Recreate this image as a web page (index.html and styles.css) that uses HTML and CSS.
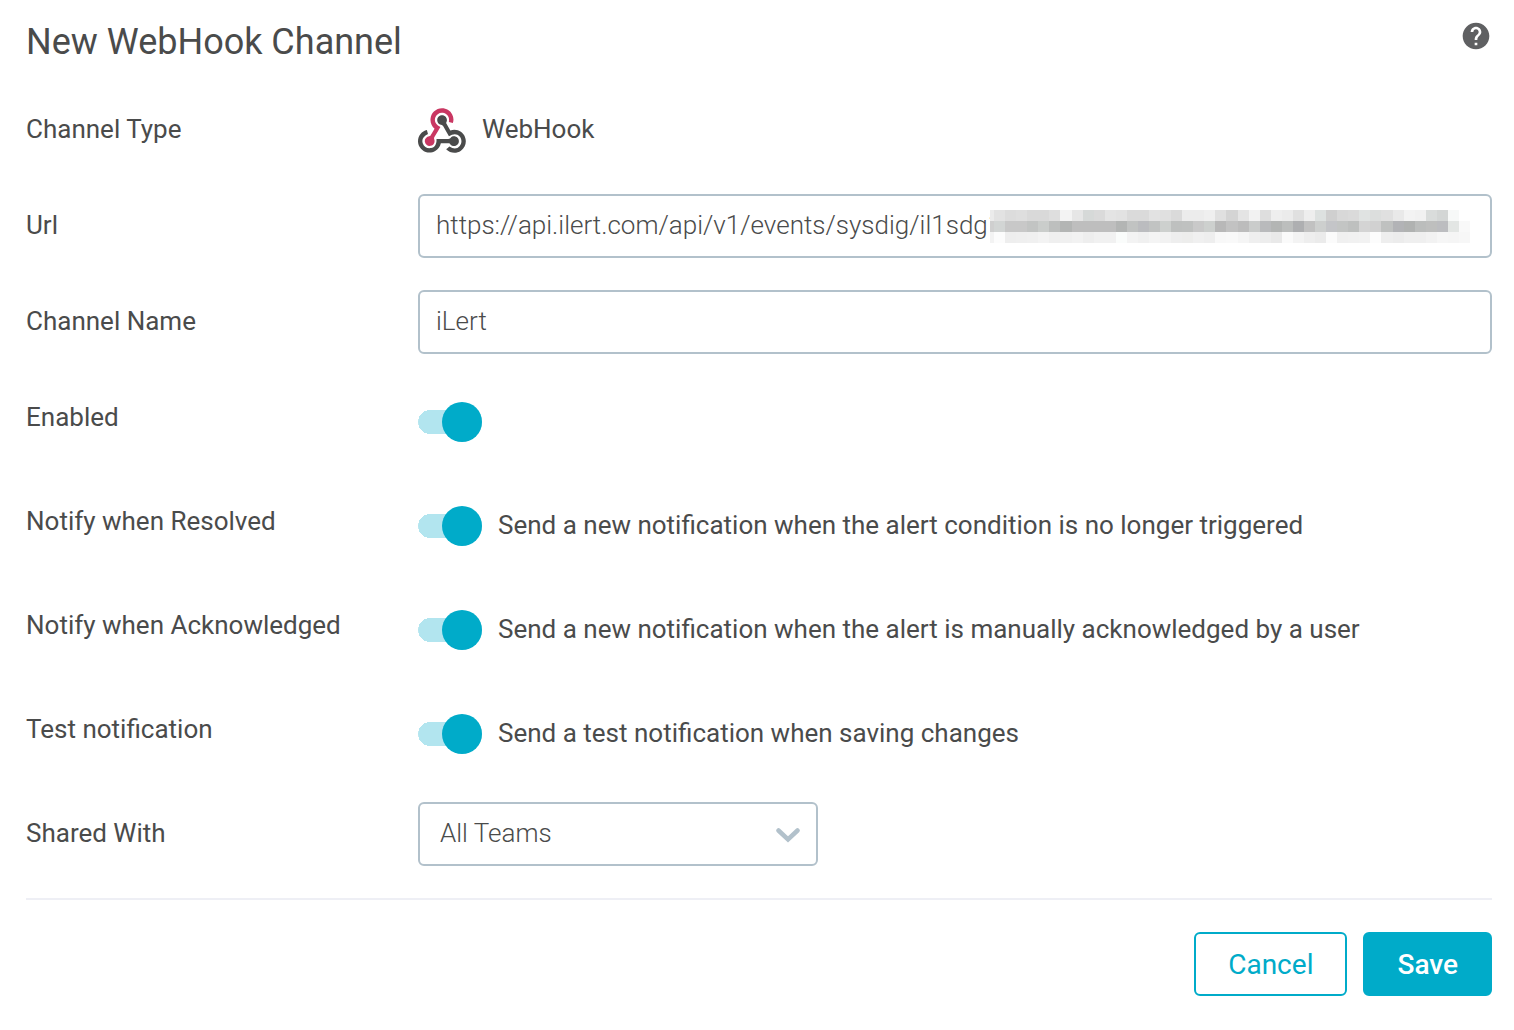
FILE: index.html
```html
<!DOCTYPE html>
<html lang="en">
<head>
<meta charset="utf-8">
<meta name="viewport" content="width=device-width, initial-scale=1">
<title>New WebHook Channel</title>
<link rel="stylesheet" href="styles.css">
</head>
<body>
<form class="channel">
  <header class="channel-header">
    <h1 class="title">New WebHook Channel</h1>
    <button class="help" type="button" aria-label="Help">
      <svg viewBox="0 0 24 24" width="32" height="32" aria-hidden="true"><path fill="#5f6062" d="M12 2C6.480 2 2 6.480 2 12s4.480 10 10 10 10-4.480 10-10S17.520 2 12 2zm1 17h-2v-2h2v2zm2.070-7.750l-.9.920C13.450 12.900 13 13.500 13 15h-2v-.5c0-1.100.450-2.100 1.170-2.830l1.240-1.260c.370-.360.590-.860.590-1.410 0-1.100-.9-2-2-2s-2 .9-2 2H8c0-2.210 1.790-4 4-4s4 1.790 4 4c0 .880-.360 1.680-.930 2.250z"/></svg>
    </button>
  </header>

  <div class="fields">
    <div class="row">
      <span class="label">Channel Type</span>
      <div class="control type">
        <svg viewBox="0 0 256 239" width="48" height="45" aria-hidden="true">
          <path fill="#c93762" d="M119.540 100.503C108.930 118.339 98.765 135.611 88.388 152.754C85.723 157.154 84.404 160.739 86.533 166.333C92.411 181.787 84.119 196.826 68.535 200.908C53.838 204.759 39.519 195.100 36.603 179.365C34.019 165.438 44.827 151.785 60.182 149.608C61.469 149.424 62.782 149.403 64.945 149.241C72.469 136.624 80.177 123.700 88.303 110.073C73.612 95.465 64.868 78.389 66.803 57.229C68.171 42.272 74.053 29.346 84.803 18.752C105.393 -1.536 136.805 -4.821 161.049 10.751C184.333 25.709 194.997 54.845 185.907 79.782C179.053 77.924 172.151 76.050 164.564 73.992C167.418 60.127 165.307 47.677 155.956 37.011C149.778 29.969 141.850 26.278 132.835 24.918C114.764 22.188 97.021 33.798 91.756 51.536C85.780 71.667 94.825 88.111 119.540 100.503Z"/>
          <path fill="#4a4b4b" d="M149.841 79.411C157.316 92.597 164.906 105.983 172.428 119.246C210.449 107.483 239.114 128.530 249.399 151.063C261.820 178.282 253.329 210.520 228.933 227.312C203.893 244.551 172.226 241.606 150.041 219.462C155.695 214.729 161.377 209.975 167.448 204.896C189.360 219.088 208.525 218.420 222.753 201.614C234.886 187.277 234.623 165.900 222.138 151.864C207.730 135.667 188.431 135.173 165.103 150.721C155.426 133.553 145.581 116.522 136.210 99.230C133.051 93.402 129.562 90.021 122.441 88.787C110.547 86.725 102.869 76.512 102.408 65.070C101.955 53.754 108.622 43.525 119.042 39.539C129.364 35.591 141.477 38.778 148.420 47.554C154.094 54.724 155.897 62.794 152.911 71.637C152.081 74.103 151.006 76.489 149.841 79.411Z"/>
          <path fill="#4a4b4b" d="M167.707 187.210L121.936 187.210C117.550 205.254 108.074 219.822 91.746 229.086C79.054 236.286 65.374 238.727 50.814 236.377C24.006 232.053 2.086 207.920 .156 180.745C-2.028 149.962 19.131 122.599 47.334 116.453C49.281 123.524 51.249 130.663 53.196 137.717C27.320 150.919 18.364 167.553 25.605 188.353C31.981 206.657 50.090 216.690 69.753 212.810C89.833 208.848 99.957 192.160 98.721 165.378C117.757 165.378 136.809 165.181 155.847 165.475C163.281 165.592 169.020 164.821 174.620 158.267C183.841 147.483 200.811 148.456 210.741 158.641C220.889 169.050 220.403 185.798 209.664 195.768C199.303 205.388 182.933 204.874 173.240 194.509C171.248 192.372 169.678 189.835 167.707 187.210Z"/>
        </svg>
        <span class="type-name">WebHook</span>
      </div>
    </div>

    <div class="row">
      <label class="label" for="url">Url</label>
      <div class="control url">
        <input class="input" id="url" type="text" value="https://api.ilert.com/api/v1/events/sysdig/il1sdg1">
        <svg class="mask" id="mask" viewBox="0 0 477 33" width="480" height="33" preserveAspectRatio="none" shape-rendering="crispEdges" aria-hidden="true"></svg>
      </div>
    </div>

    <div class="row">
      <label class="label" for="name">Channel Name</label>
      <div class="control"><input class="input" id="name" type="text" value="iLert"></div>
    </div>

    <div class="row row-toggle">
      <label class="label" for="enabled">Enabled</label>
      <div class="control toggle"><input class="switch" id="enabled" type="checkbox" checked></div>
    </div>

    <div class="row row-toggle">
      <label class="label" for="resolved">Notify when Resolved</label>
      <div class="control toggle">
        <input class="switch" id="resolved" type="checkbox" checked>
        <label class="hint" for="resolved">Send a new notification when the alert condition is no longer triggered</label>
      </div>
    </div>

    <div class="row row-toggle">
      <label class="label" for="acknowledged">Notify when Acknowledged</label>
      <div class="control toggle">
        <input class="switch" id="acknowledged" type="checkbox" checked>
        <label class="hint" for="acknowledged">Send a new notification when the alert is manually acknowledged by a user</label>
      </div>
    </div>

    <div class="row row-toggle">
      <label class="label" for="test">Test notification</label>
      <div class="control toggle">
        <input class="switch" id="test" type="checkbox" checked>
        <label class="hint" for="test">Send a test notification when saving changes</label>
      </div>
    </div>

    <div class="row">
      <label class="label" for="shared">Shared With</label>
      <div class="control shared">
        <select class="input select" id="shared"><option>All Teams</option></select>
        <svg class="chevron" viewBox="0 0 24 16" width="24" height="16" aria-hidden="true"><path d="M2.500 3.500L12 12.500L21.500 3.500" fill="none" stroke="#b2c1cb" stroke-width="4.500" stroke-linecap="round"/></svg>
      </div>
    </div>
  </div>

  <footer class="actions">
    <button class="button" type="button">Cancel</button>
    <button class="button primary" type="submit">Save</button>
  </footer>
</form>
<script src="mask.js"></script>
</body>
</html>
```
FILE: styles.css
```css
* {
  box-sizing: border-box;
}

body {
  margin: 0;
  background: #fff;
  color: #4a4b4b;
  font-family: Roboto, "Liberation Sans", sans-serif;
  font-size: 26px;
  line-height: 32px;
}

.channel {
  padding: 18px 22px 34px 26px;
}

.channel-header {
  display: flex;
  justify-content: space-between;
  align-items: flex-start;
  margin-bottom: 32px;
}

.title {
  margin: 0;
  font-size: 36px;
  font-weight: 400;
  line-height: 48px;
}

.help {
  display: flex;
  margin: 0;
  padding: 2px 0;
  border: 0;
  background: none;
}

.fields {
  display: flex;
  flex-direction: column;
  gap: 32px;
  padding-bottom: 32px;
  border-bottom: 2px solid #eeeff5;
}

.row {
  display: grid;
  grid-template-columns: 392px 1fr;
  min-height: 64px;
}

.row-toggle {
  min-height: 72px;
}

.label {
  line-height: 62px;
}

.control {
  display: flex;
  align-items: center;
}

.type {
  gap: 16px;
}

.type-name,
.hint {
  padding-bottom: 2px;
}

.url,
.shared {
  position: relative;
}

.input {
  width: 100%;
  height: 64px;
  margin: 0;
  padding: 0 16px 2px;
  border: 2px solid #b2c1cb;
  border-radius: 6px;
  background: #fff;
  color: #4a4b4b;
  font: inherit;
  font-weight: 300;
}

.mask {
  position: absolute;
  top: 16px;
  right: 22px;
}

.toggle {
  gap: 16px;
}

.switch {
  appearance: none;
  display: flex;
  flex: none;
  align-items: center;
  justify-content: flex-end;
  width: 64px;
  height: 40px;
  margin: 0;
  background: linear-gradient(#b2e5ef, #b2e5ef) right / 52px 24px no-repeat, radial-gradient(circle at 12px 20px, #b2e5ef 12px, transparent 12px);
  border-radius: 20px;
}

.switch::before {
  content: "";
  width: 40px;
  height: 40px;
  border-radius: 50%;
  background: #00abc9;
}

.shared {
  width: 400px;
}

.select {
  appearance: none;
  padding-left: 20px;
}

.chevron {
  position: absolute;
  top: 25px;
  right: 18px;
  pointer-events: none;
}

.actions {
  display: flex;
  justify-content: flex-end;
  gap: 16px;
  padding-top: 32px;
}

.button {
  height: 64px;
  margin: 0;
  padding: 2px 32px 0;
  border: 2px solid #00abc9;
  border-radius: 6px;
  background: #fff;
  color: #00abc9;
  font: inherit;
  font-size: 28px;
}

.primary {
  background: #00abc9;
  color: #fff;
  font-weight: 500;
}
```
FILE: mask.js
```js
// Shades of the blocks that hide the secret part of the URL, one list per row.
const rows = [
  "ebebeb e2e2e2 dcdcdc dedede d9d9d9 d9d9d9 dedede f3f3f3 e6e6e6 d6d9d8 dadada e4e4e4 e2e2e2 dadada dadada e2e2e2 e0e0e0 dadada ececec ececec efefef e0e0e0 d4d4d4 e4e4e4 f2f2f2 dedede eeeeee ebebeb e0e0e0 eeeeee dde1e0 cfcfcf d8d8d8 dadada e0e3e2 dcdedd e0e0e0 e9e9e9 f3f3f3 f1f1f1 d9dcdb d3d6d5 f7f9f8 ffffff",
  "cfcfcf d2d5d4 c8c8c8 c8c8c8 c2c4c3 cacdcb bdbfbe b3b5b4 bebebe bebebe bebebe bebebe b3b5b4 c1c3c2 bbbcbf c1c3c2 cdd0ce bec0bf bfc1c0 c9c9c9 cdd0ce b8b8b8 c2c2c2 bcbcbc cacccb b9babc b3b5b4 bcbebd aeafb1 c1c1c1 cdcfce c4c5c8 c3c5c4 bec0bf d4d4d4 d1d1d1 bfc1c0 b2b3b6 b0b2b1 bbbdbc bebfbe bcbdc0 e3e6e4 f9f9f9",
  "f3f3f3 fcfcfc eeeeee efefef f0f0f0 f3f3f3 efefef f0f0f0 f2f2f2 eeeeee f1f1f1 f1f1f1 fafcfb f3f3f3 f0f0f0 f4f4f4 f2f2f2 eeeeee ededec f0f0f0 eeeeee f8f8f8 f9f9f9 f5f5f5 efefef ededed e9e9e9 fafafa f3f3f3 eeeeee ebebeb fbfbfb f0f0f0 f1f1f1 f2f2f2 fcfcfc eeeeee ececec efefef efefef f2f2f2 f6f6f6 f5f5f5 f7f7f7"
];
const size = 11;
const first = 4;
const mask = document.getElementById("mask");

rows.forEach((row, y) => {
  row.split(" ").forEach((shade, i) => {
    const rect = document.createElementNS("http://www.w3.org/2000/svg", "rect");
    rect.setAttribute("x", i === 0 ? 0 : first + (i - 1) * size);
    rect.setAttribute("y", y * size);
    rect.setAttribute("width", i === 0 ? first : size);
    rect.setAttribute("height", size);
    rect.setAttribute("fill", "#" + shade);
    mask.append(rect);
  });
});
```
